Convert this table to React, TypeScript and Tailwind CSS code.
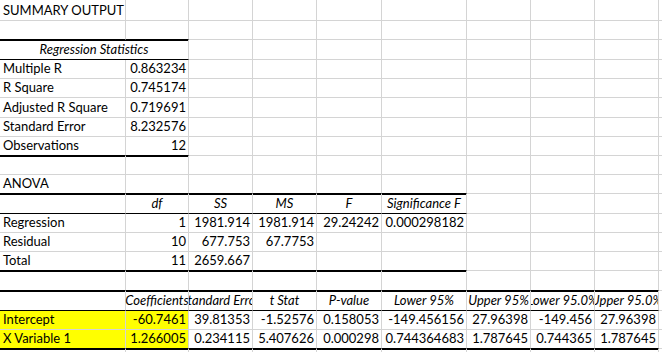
import React from 'react';

type Cell = {
  t?: string;
  a?: 'l' | 'r' | 'c';
  i?: boolean;
  y?: boolean;
  w?: string;
  spill?: boolean;
};

type Row = {
  h: string;
  cells: Cell[];
  topBlack?: number; // columns with the heavy line on top
  bottomBlack?: number; // columns with a black bottom line
};

// column widths, right gridline included
const COLS = [
  'w-[126px]',
  'w-[63px]',
  'w-[64px]',
  'w-[64px]',
  'w-[65px]',
  'w-[85px]',
  'w-[64px]',
  'w-[64px]',
  'w-[64px]',
];

const L = (t: string): Cell => ({ t, a: 'l' });
const N = (t: string): Cell => ({ t, a: 'r' });
const H = (t: string): Cell => ({ t, a: 'c', i: true });

const rows: Row[] = [
  { h: 'h-[21px]', cells: [{ t: 'SUMMARY OUTPUT', a: 'l', spill: true }] },
  { h: 'h-[19px]', cells: [], bottomBlack: 2 },
  {
    h: 'h-[20px]',
    cells: [{ t: 'Regression Statistics', a: 'c', i: true, w: 'w-[189px]' }],
    topBlack: 1,
    bottomBlack: 1,
  },
  { h: 'h-[19px]', cells: [L('Multiple R'), N('0.863234')] },
  { h: 'h-[19px]', cells: [L('R Square'), N('0.745174')] },
  { h: 'h-[20px]', cells: [L('Adjusted R Square'), N('0.719691')] },
  { h: 'h-[19px]', cells: [L('Standard Error'), N('8.232576')] },
  { h: 'h-[19px]', cells: [L('Observations'), N('12')], bottomBlack: 2 },
  { h: 'h-[19px]', cells: [], topBlack: 2 },
  { h: 'h-[19px]', cells: [L('ANOVA')], bottomBlack: 6 },
  {
    h: 'h-[20px]',
    cells: [{}, H('df'), H('SS'), H('MS'), H('F'), H('Significance F')],
    topBlack: 6,
    bottomBlack: 6,
  },
  {
    h: 'h-[19px]',
    cells: [L('Regression'), N('1'), N('1981.914'), N('1981.914'), N('29.24242'), N('0.000298182')],
  },
  { h: 'h-[19px]', cells: [L('Residual'), N('10'), N('677.753'), N('67.7753')] },
  { h: 'h-[19px]', cells: [L('Total'), N('11'), N('2659.667')], bottomBlack: 6 },
  { h: 'h-[20px]', cells: [], topBlack: 6, bottomBlack: 9 },
  {
    h: 'h-[20px]',
    cells: [
      {},
      { t: 'Coefficients', a: 'c', i: true, spill: true },
      H('Standard Error'),
      H('t Stat'),
      H('P-value'),
      H('Lower 95%'),
      H('Upper 95%'),
      H('Lower 95.0%'),
      H('Upper 95.0%'),
    ],
    topBlack: 9,
    bottomBlack: 9,
  },
  {
    h: 'h-[19px]',
    cells: [
      { t: 'Intercept', a: 'l', y: true },
      { t: '-60.7461', a: 'r', y: true },
      N('39.81353'),
      N('-1.52576'),
      N('0.158053'),
      N('-149.456156'),
      N('27.96398'),
      N('-149.456'),
      N('27.96398'),
    ],
  },
  {
    h: 'h-[19px]',
    cells: [
      { t: 'X Variable 1', a: 'l', y: true },
      { t: '1.266005', a: 'r', y: true },
      N('0.234115'),
      N('5.407626'),
      N('0.000298'),
      N('0.744364683'),
      N('1.787645'),
      N('0.744365'),
      N('1.787645'),
    ],
    bottomBlack: 9,
  },
  { h: 'h-[19px]', cells: [], topBlack: 9 },
];

function SheetRow({ row }: { row: Row }) {
  // merged first cell eats column B
  const merged = row.cells[0]?.w !== undefined;
  const slots: { cell: Cell; w: string; col: number }[] = [];
  let col = 0;
  let k = 0;
  while (col < COLS.length) {
    const cell = row.cells[k] ?? {};
    slots.push({ cell, w: cell.w ?? COLS[col], col });
    col += merged && k === 0 ? 2 : 1;
    k++;
  }

  return (
    <div className={`flex ${row.h}`}>
      {slots.map(({ cell, w, col }) => {
        const black = (row.bottomBlack ?? 0) > col;
        const heavy = (row.topBlack ?? 0) > col;
        const align =
          cell.a === 'r' ? 'justify-end pr-[2px]' : cell.a === 'c' ? 'justify-center' : 'justify-start pl-[3px]';
        return (
          <div
            key={col}
            className={`flex shrink-0 items-end whitespace-nowrap border-r border-b border-r-[#d4d4d4] pb-[2px] ${w} ${align} ${
              black ? 'border-b-black' : 'border-b-[#d4d4d4]'
            } ${heavy ? 'shadow-[inset_0_1px_0_#000]' : ''} ${cell.y ? 'bg-[#ffff00]' : ''} ${
              cell.spill ? '[clip-path:inset(0_-100px_0_-100px)]' : 'overflow-hidden'
            } ${cell.i ? 'italic' : ''}`}
          >
            {cell.t && <span className="leading-[15px]">{cell.t}</span>}
          </div>
        );
      })}
      <div className="flex-1 border-b border-b-[#d4d4d4]" />
    </div>
  );
}

export default function App() {
  return (
    <div className="h-[352px] w-[662px] overflow-hidden bg-white text-[13px] text-black [font-family:Lato,'Liberation_Sans',sans-serif]">
      {rows.map((row, idx) => (
        <SheetRow key={idx} row={row} />
      ))}
    </div>
  );
}
